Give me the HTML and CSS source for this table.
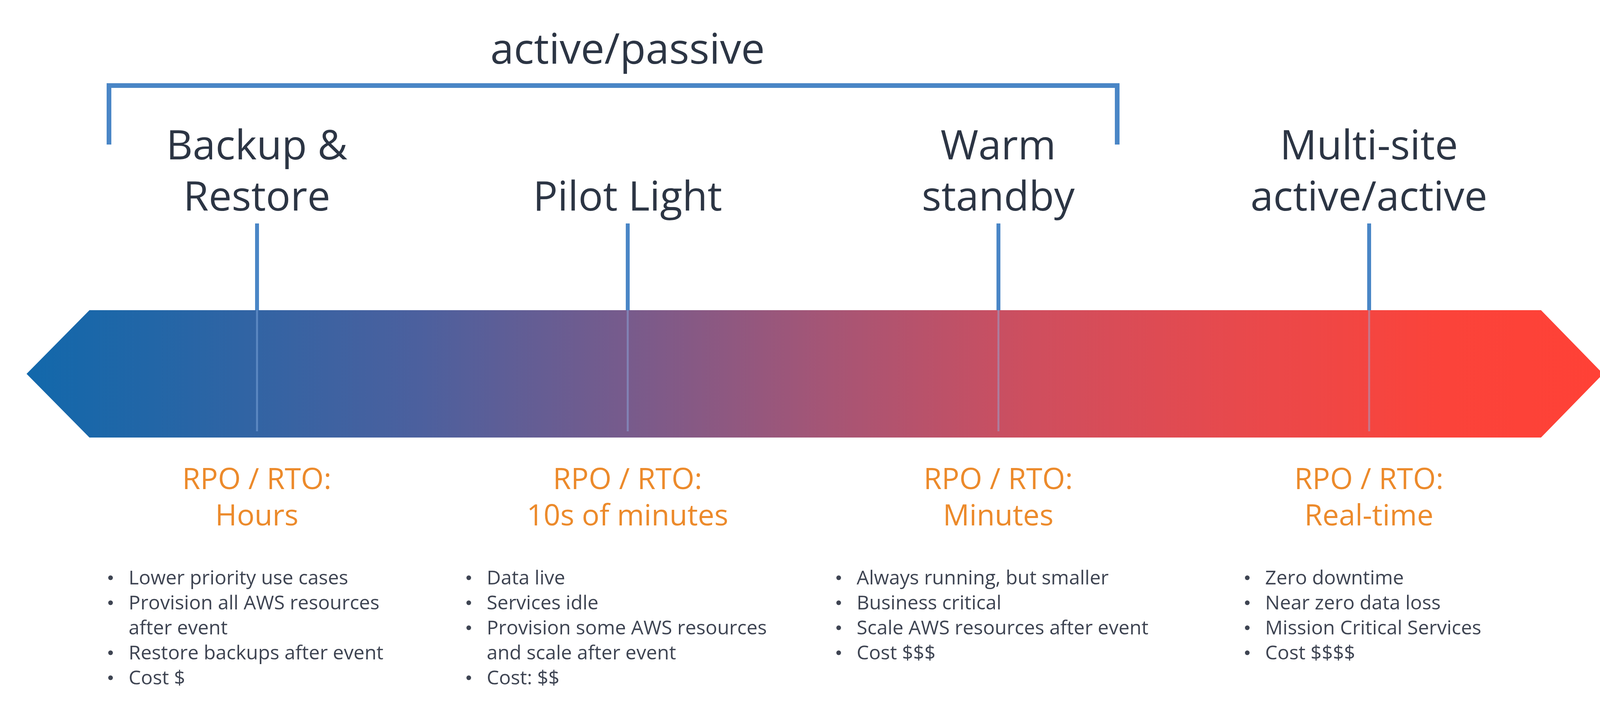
FILE: index.html
```html
<!DOCTYPE html>
<html lang="en">
<head>
<meta charset="utf-8">
<title>Disaster recovery strategies</title>
<link rel="stylesheet" href="styles.css">
</head>
<body>
<main class="slide">
  <div class="grid title-row">
    <div class="title">active/passive</div>
  </div>

  <div class="scope">
    <div class="bracket"></div>
    <div class="grid heads">
      <div class="col">
        <h2 class="strategy">Backup &amp;
Restore</h2>
        <div class="stem"></div>
      </div>
      <div class="col">
        <h2 class="strategy">Pilot Light</h2>
        <div class="stem"></div>
      </div>
      <div class="col">
        <h2 class="strategy">Warm
standby</h2>
        <div class="stem"></div>
      </div>
      <div class="col">
        <h2 class="strategy">Multi-site
active/active</h2>
        <div class="stem"></div>
      </div>
    </div>
  </div>

  <svg class="arrow" viewBox="0 0 4167 326" preserveAspectRatio="none" aria-hidden="true">
    <defs>
      <linearGradient id="spectrum" x1="66" y1="0" x2="4104" y2="0" gradientUnits="userSpaceOnUse">
        <stop offset="0" stop-color="#1268ab"/>
        <stop offset="0.08" stop-color="#2266a7"/>
        <stop offset="0.25" stop-color="#4c609e"/>
        <stop offset="0.38" stop-color="#775b8c"/>
        <stop offset="0.51" stop-color="#a65575"/>
        <stop offset="0.64" stop-color="#cf4e5e"/>
        <stop offset="0.77" stop-color="#e8494c"/>
        <stop offset="0.90" stop-color="#fb433a"/>
        <stop offset="1" stop-color="#ff4136"/>
      </linearGradient>
    </defs>
    <polygon points="68,163 229,0 3945,0 4104,163 3945,326 229,326" fill="url(#spectrum)"/>
    <g class="inner-ticks">
      <line x1="658" y1="0" x2="658" y2="310"/>
      <line x1="1607" y1="0" x2="1607" y2="310"/>
      <line x1="2556" y1="0" x2="2556" y2="310"/>
      <line x1="3505" y1="0" x2="3505" y2="310"/>
    </g>
  </svg>

  <div class="grid details">
    <div class="col">
      <p class="rpo">RPO / RTO:
Hours</p>
      <ul class="points">
        <li><span>Lower priority use cases</span></li>
        <li><span>Provision all AWS resources<br>after event</span></li>
        <li><span>Restore backups after event</span></li>
        <li><span>Cost $</span></li>
      </ul>
    </div>
    <div class="col">
      <p class="rpo">RPO / RTO:
10s of minutes</p>
      <ul class="points">
        <li><span>Data live</span></li>
        <li><span>Services idle</span></li>
        <li><span>Provision some AWS resources<br>and scale after event</span></li>
        <li><span>Cost: $$</span></li>
      </ul>
    </div>
    <div class="col">
      <p class="rpo">RPO / RTO:
Minutes</p>
      <ul class="points">
        <li><span>Always running, but smaller</span></li>
        <li><span>Business critical</span></li>
        <li><span>Scale AWS resources after event</span></li>
        <li><span>Cost $$$</span></li>
      </ul>
    </div>
    <div class="col">
      <p class="rpo">RPO / RTO:
Real-time</p>
      <ul class="points">
        <li><span>Zero downtime</span></li>
        <li><span>Near zero data loss</span></li>
        <li><span>Mission Critical Services</span></li>
        <li><span>Cost $$$$</span></li>
      </ul>
    </div>
  </div>
</main>
</body>
</html>
```

FILE: styles.css
```css
* {
  box-sizing: border-box;
}

html,
body {
  margin: 0;
  padding: 0;
  background: #ffffff;
}

body {
  width: 4167px;
  height: 1861px;
  overflow: hidden;
  font-family: "Open Sans", "Noto Sans", "DejaVu Sans", sans-serif;
  color: #2c3544;
}

.slide {
  padding-top: 58px;
}

.grid {
  display: grid;
  grid-template-columns: repeat(4, 949px);
  padding-left: 183px;
}

.col {
  display: flex;
  flex-direction: column;
  align-items: center;
  text-align: center;
}

/* ---------- top label ---------- */
.title-row {
  height: 128px;
}

.title {
  grid-column: 2;
  justify-self: center;
  font-size: 108px;
  line-height: 128px;
  white-space: nowrap;
  color: #2c3544;
}

/* ---------- bracket + strategy names ---------- */
.scope {
  position: relative;
}

.bracket {
  position: absolute;
  top: 27px;
  left: 273px;
  width: 2593px;
  height: 157px;
  border: 12px solid #4a86c6;
  border-bottom: none;
}

.heads {
  padding-top: 116px;
}

.heads .col {
  justify-content: flex-end;
}

.strategy {
  margin: 0;
  font-weight: 400;
  font-size: 105px;
  line-height: 131px;
  white-space: pre;
  color: #2c3544;
}

.stem {
  width: 10px;
  height: 222px;
  margin-top: 8px;
  background: #4a86c6;
}

/* ---------- gradient arrow ---------- */
.arrow {
  display: block;
  width: 4167px;
  height: 326px;
}

.inner-ticks line {
  stroke: #8fb4e6;
  stroke-opacity: 0.45;
  stroke-width: 5;
}

/* ---------- RPO / RTO and bullets ---------- */
.details {
  padding-top: 57px;
}

.rpo {
  margin: 0;
  font-size: 75px;
  line-height: 93px;
  white-space: pre;
  color: #ec8a2b;
}

.points {
  list-style: none;
  margin: 82px 30px 0 0;
  padding: 0;
  width: max-content;
  text-align: left;
  font-size: 50px;
  line-height: 64px;
  color: #3e4452;
}

.col:nth-child(-n+2) .points {
  margin-right: 56px;
}

.points li {
  display: flex;
  align-items: flex-start;
}

.points li::before {
  content: "";
  flex: none;
  width: 12px;
  height: 12px;
  margin-top: 28px;
  margin-right: 40px;
  border-radius: 50%;
  background: #3e4452;
}

.points li span {
  white-space: nowrap;
}
```
